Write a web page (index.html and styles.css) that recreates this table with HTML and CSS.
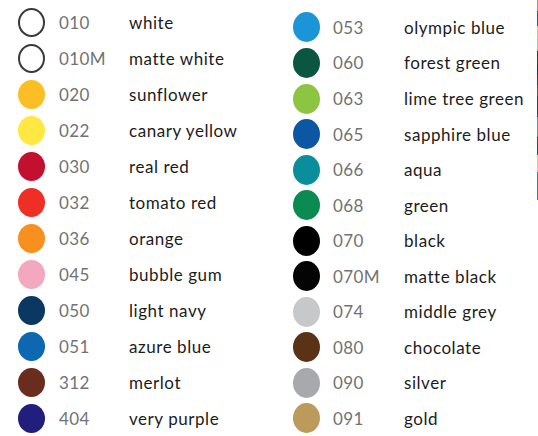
FILE: index.html
```html
<!DOCTYPE html>
<html>
<head>
<meta charset="utf-8">
<link rel="stylesheet" href="styles.css">
</head>
<body>
<div class="sheet">
  <ul class="col col-left">
    <li class="row"><span class="dot dot-outline"></span><span class="code">010</span><span class="name">white</span></li>
    <li class="row"><span class="dot dot-outline"></span><span class="code">010M</span><span class="name">matte white</span></li>
    <li class="row"><span class="dot c020"></span><span class="code">020</span><span class="name">sunflower</span></li>
    <li class="row"><span class="dot c022"></span><span class="code">022</span><span class="name">canary yellow</span></li>
    <li class="row"><span class="dot c030"></span><span class="code">030</span><span class="name">real red</span></li>
    <li class="row"><span class="dot c032"></span><span class="code">032</span><span class="name">tomato red</span></li>
    <li class="row"><span class="dot c036"></span><span class="code">036</span><span class="name">orange</span></li>
    <li class="row"><span class="dot c045"></span><span class="code">045</span><span class="name">bubble gum</span></li>
    <li class="row"><span class="dot c050"></span><span class="code">050</span><span class="name">light navy</span></li>
    <li class="row"><span class="dot c051"></span><span class="code">051</span><span class="name">azure blue</span></li>
    <li class="row"><span class="dot c312"></span><span class="code">312</span><span class="name">merlot</span></li>
    <li class="row"><span class="dot c404"></span><span class="code">404</span><span class="name">very purple</span></li>
  </ul>
  <ul class="col col-right">
    <li class="row"><span class="dot c053"></span><span class="code">053</span><span class="name">olympic blue</span></li>
    <li class="row"><span class="dot c060"></span><span class="code">060</span><span class="name">forest green</span></li>
    <li class="row"><span class="dot c063"></span><span class="code">063</span><span class="name">lime tree green</span></li>
    <li class="row"><span class="dot c065"></span><span class="code">065</span><span class="name">sapphire blue</span></li>
    <li class="row"><span class="dot c066"></span><span class="code">066</span><span class="name">aqua</span></li>
    <li class="row"><span class="dot c068"></span><span class="code">068</span><span class="name">green</span></li>
    <li class="row"><span class="dot c070"></span><span class="code">070</span><span class="name">black</span></li>
    <li class="row"><span class="dot c070m"></span><span class="code">070M</span><span class="name">matte black</span></li>
    <li class="row"><span class="dot c074"></span><span class="code">074</span><span class="name">middle grey</span></li>
    <li class="row"><span class="dot c080"></span><span class="code">080</span><span class="name">chocolate</span></li>
    <li class="row"><span class="dot c090"></span><span class="code">090</span><span class="name">silver</span></li>
    <li class="row"><span class="dot c091"></span><span class="code">091</span><span class="name">gold</span></li>
  </ul>
  <div class="edge-strip"></div>
</div>
</body>
</html>
```
FILE: styles.css
```css
html, body {
  margin: 0;
  padding: 0;
  background: #ffffff;
}
body {
  font-family: "Lato", "Noto Sans", sans-serif;
  width: 538px;
  height: 436px;
  overflow: hidden;
}
.sheet {
  position: relative;
  display: flex;
  width: 538px;
  height: 436px;
}
.col {
  list-style: none;
  margin: 0;
  padding: 0;
  display: flex;
  flex-direction: column;
}
.col-left {
  width: 275px;
  padding-top: 4px;
  padding-left: 18px;
  box-sizing: border-box;
}
.col-right {
  padding-top: 9.7px;
  padding-left: 18px;
}
.col-left .row { height: 36px; }
.col-right .row { height: 35.6px; }
.row {
  display: flex;
  align-items: center;
}
.dot {
  flex: none;
  width: 27px;
  height: 29px;
  border-radius: 50%;
  box-sizing: border-box;
}
.col-right .dot { height: 30px; }
.code {
  width: 70px;
  margin-left: 14px;
  font-size: 17px;
  color: #727272;
  letter-spacing: 0.4px;
}
.col-right .code {
  width: 71px;
  margin-left: 13px;
}
.name {
  font-size: 17px;
  color: #1c1c1c;
  letter-spacing: 0.55px;
}
.dot-outline { border: 2px solid #3a3a3a; background: #fff; }
.c020 { background: #fbbf25; }
.c022 { background: #ffe843; }
.c030 { background: #c4102f; }
.c032 { background: #ee2f26; }
.c036 { background: #f7901f; }
.c045 { background: #f4a8bf; }
.c050 { background: #0b3860; }
.c051 { background: #0d67b1; }
.c312 { background: #6a2c1c; }
.c404 { background: #221e7b; }
.c053 { background: #1b95d7; }
.c060 { background: #0a5641; }
.c063 { background: #8dc542; }
.c065 { background: #0c57a3; }
.c066 { background: #0b8e9c; }
.c068 { background: #0b8a52; }
.c070 { background: #000000; }
.c070m { background: #040404; }
.c074 { background: #c7c8ca; }
.c080 { background: #5a3216; }
.c090 { background: #a8a9ad; }
.c091 { background: #bb9a5b; }
.edge-strip {
  position: absolute;
  right: 0;
  top: 0;
  width: 1px;
  height: 200px;
  background: linear-gradient(to bottom,
    #b19a6a 0, #b19a6a 11px,
    #1d56c8 11px, #1d56c8 26px,
    #f5c518 26px, #f5c518 39px,
    #b5b8bd 39px, #b5b8bd 51px,
    #4a3324 51px, #4a3324 65px,
    #1b2f6b 65px, #1b2f6b 75px,
    #a01035 75px, #a01035 85px,
    #e0163c 85px, #e0163c 96px,
    #24389a 96px, #24389a 117px,
    #2aa3e0 117px, #2aa3e0 137px,
    #155c3e 137px, #155c3e 155px,
    #f4d21c 155px, #f4d21c 172px,
    #2a7fd4 172px, #2a7fd4 200px);
}
```
